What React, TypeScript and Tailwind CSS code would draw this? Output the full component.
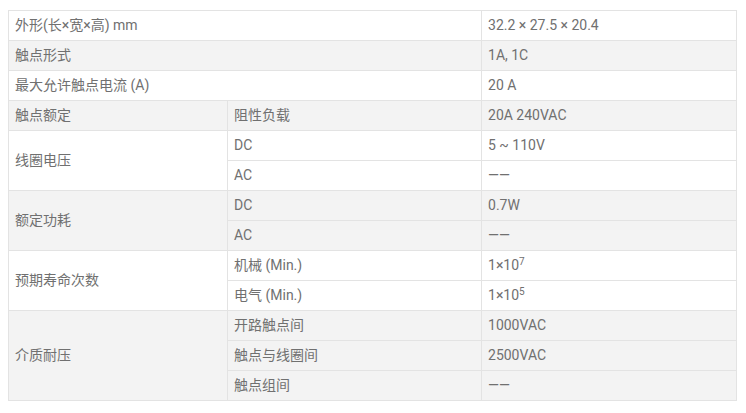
import React from "react";

const td = "border border-[#e3e3e3] pl-[6px] pr-[5px] h-[30px] align-middle";

export default function App() {
  return (
    <div className="w-[746px] h-[413px] bg-white pt-[10px] pl-[8px] text-[14px] text-[#707070] font-['Roboto','Noto_Sans_CJK_SC',sans-serif]">
      <table className="border-collapse w-[728px] table-fixed">
        <colgroup>
          <col className="w-[219px]" />
          <col className="w-[254px]" />
          <col className="w-[255px]" />
        </colgroup>
        <tbody>
          <tr className="bg-white">
            <td className={td} colSpan={2}>外形(长×宽×高) mm</td>
            <td className={td}>32.2 × 27.5 × 20.4</td>
          </tr>
          <tr className="bg-[#f3f3f3]">
            <td className={td} colSpan={2}>触点形式</td>
            <td className={td}>1A, 1C</td>
          </tr>
          <tr className="bg-white">
            <td className={td} colSpan={2}>最大允许触点电流 (A)</td>
            <td className={td}>20 A</td>
          </tr>
          <tr className="bg-[#f3f3f3]">
            <td className={td}>触点额定</td>
            <td className={td}>阻性负载</td>
            <td className={td}>20A 240VAC</td>
          </tr>
          <tr className="bg-white">
            <td className={td} rowSpan={2}>线圈电压</td>
            <td className={td}>DC</td>
            <td className={td}>5 ~ 110V</td>
          </tr>
          <tr className="bg-white">
            <td className={td}>AC</td>
            <td className={td}>——</td>
          </tr>
          <tr className="bg-[#f3f3f3]">
            <td className={td} rowSpan={2}>额定功耗</td>
            <td className={td}>DC</td>
            <td className={td}>0.7W</td>
          </tr>
          <tr className="bg-[#f3f3f3]">
            <td className={td}>AC</td>
            <td className={td}>——</td>
          </tr>
          <tr className="bg-white">
            <td className={td} rowSpan={2}>预期寿命次数</td>
            <td className={td}>机械 (Min.)</td>
            <td className={td}>1×10<sup className="text-[10px]">7</sup></td>
          </tr>
          <tr className="bg-white">
            <td className={td}>电气 (Min.)</td>
            <td className={td}>1×10<sup className="text-[10px]">5</sup></td>
          </tr>
          <tr className="bg-[#f3f3f3]">
            <td className={td} rowSpan={3}>介质耐压</td>
            <td className={td}>开路触点间</td>
            <td className={td}>1000VAC</td>
          </tr>
          <tr className="bg-[#f3f3f3]">
            <td className={td}>触点与线圈间</td>
            <td className={td}>2500VAC</td>
          </tr>
          <tr className="bg-[#f3f3f3]">
            <td className={td}>触点组间</td>
            <td className={td}>——</td>
          </tr>
        </tbody>
      </table>
    </div>
  );
}
